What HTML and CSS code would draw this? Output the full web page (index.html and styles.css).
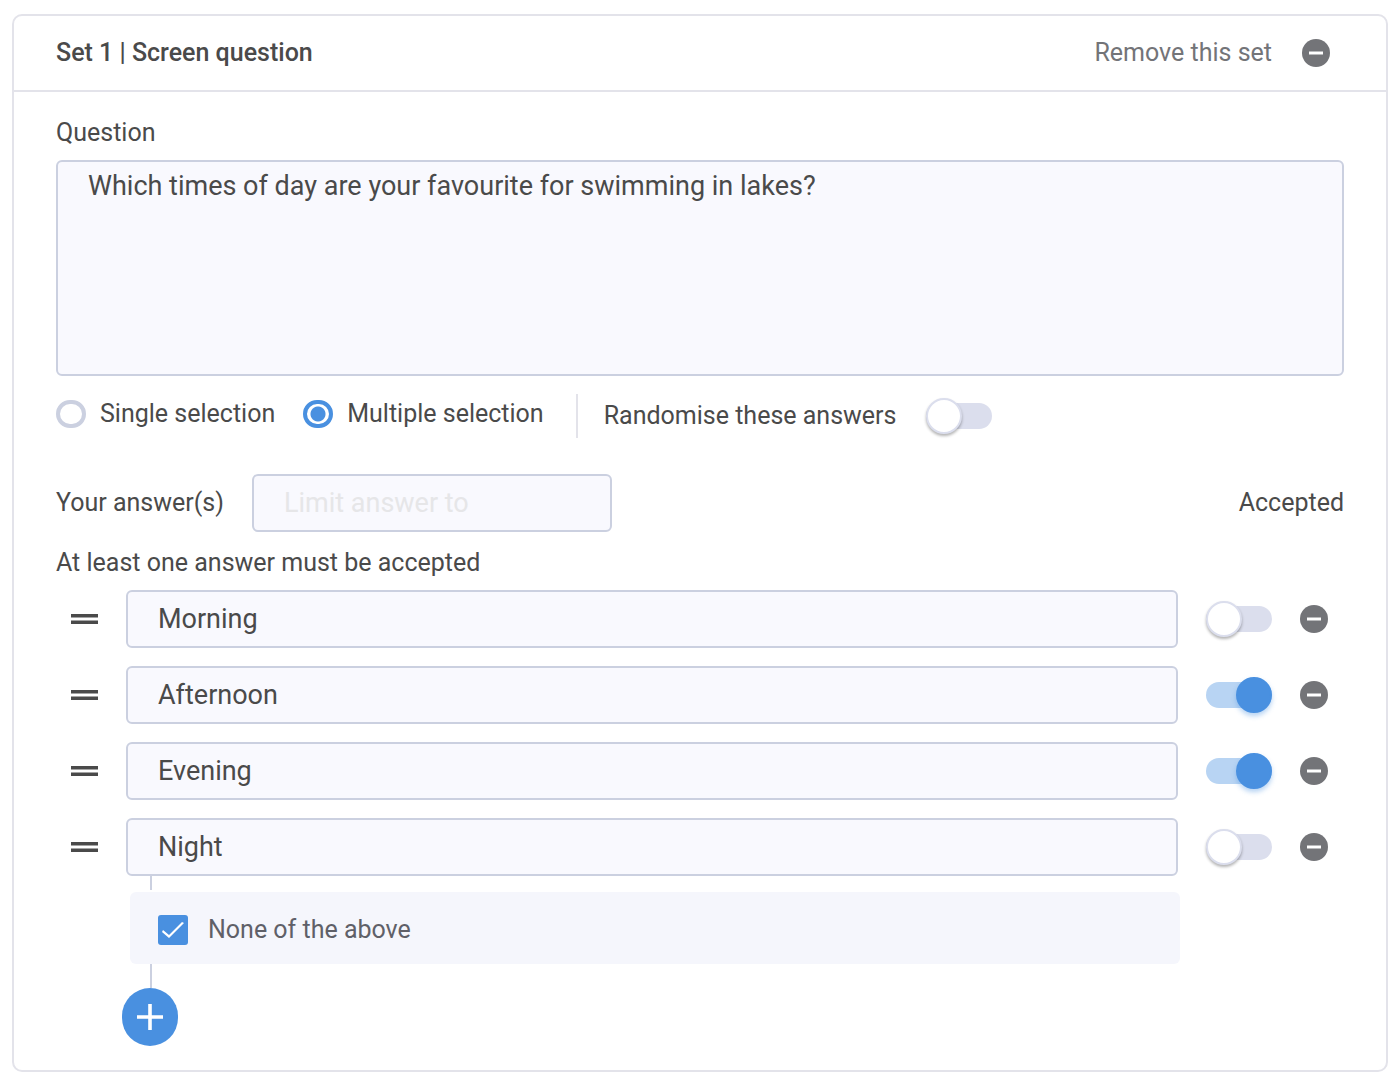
FILE: index.html
```html
<!DOCTYPE html>
<html lang="en">
<head>
  <meta charset="UTF-8" />
  <meta name="viewport" content="width=device-width, initial-scale=1" />
  <title>Screen question</title>
  <link rel="stylesheet" href="styles.css">
</head>
<body>
  <!-- shared icons -->
  <svg class="sprite" aria-hidden="true">
    <symbol id="icon-minus" viewBox="0 0 28 28">
      <circle cx="14" cy="14" r="14" fill="#737478" />
      <path d="M7 14h14" stroke="#fff" stroke-width="3" />
    </symbol>
    <symbol id="icon-drag" viewBox="0 0 27 10">
      <path d="M0 1.7h27M0 8.3h27" stroke="#4a4a4a" stroke-width="3.4" />
    </symbol>
  </svg>

  <form class="set">
    <header class="set-header">
      <h2 class="set-title">Set 1 | Screen question</h2>
      <button type="button" class="remove-set">
        <span>Remove this set</span>
        <svg class="icon-minus"><use href="#icon-minus" /></svg>
      </button>
    </header>

    <div class="set-body">
      <label class="label" for="question">Question</label>
      <textarea id="question" class="field question">Which times of day are your favourite for swimming in lakes?</textarea>

      <div class="options">
        <label class="option"><input type="radio" class="radio" name="selection" />Single selection</label>
        <label class="option"><input type="radio" class="radio" name="selection" checked />Multiple selection</label>
        <div class="randomise">
          <label for="randomise">Randomise these answers</label>
          <input type="checkbox" id="randomise" class="toggle" />
        </div>
      </div>

      <div class="answers-header">
        <label for="limit">Your answer(s)</label>
        <input type="text" id="limit" class="field limit" placeholder="Limit answer to" />
        <span class="accepted">Accepted</span>
      </div>
      <p class="hint">At least one answer must be accepted</p>

      <ul class="answers">
        <li class="answer">
          <button type="button" class="icon-button" aria-label="Move answer"><svg class="icon-drag"><use href="#icon-drag" /></svg></button>
          <input type="text" class="field" value="Morning" aria-label="Answer 1" />
          <input type="checkbox" class="toggle" aria-label="Accepted" />
          <button type="button" class="icon-button" aria-label="Remove answer"><svg class="icon-minus"><use href="#icon-minus" /></svg></button>
        </li>
        <li class="answer">
          <button type="button" class="icon-button" aria-label="Move answer"><svg class="icon-drag"><use href="#icon-drag" /></svg></button>
          <input type="text" class="field" value="Afternoon" aria-label="Answer 2" />
          <input type="checkbox" class="toggle" aria-label="Accepted" checked />
          <button type="button" class="icon-button" aria-label="Remove answer"><svg class="icon-minus"><use href="#icon-minus" /></svg></button>
        </li>
        <li class="answer">
          <button type="button" class="icon-button" aria-label="Move answer"><svg class="icon-drag"><use href="#icon-drag" /></svg></button>
          <input type="text" class="field" value="Evening" aria-label="Answer 3" />
          <input type="checkbox" class="toggle" aria-label="Accepted" checked />
          <button type="button" class="icon-button" aria-label="Remove answer"><svg class="icon-minus"><use href="#icon-minus" /></svg></button>
        </li>
        <li class="answer">
          <button type="button" class="icon-button" aria-label="Move answer"><svg class="icon-drag"><use href="#icon-drag" /></svg></button>
          <input type="text" class="field" value="Night" aria-label="Answer 4" />
          <input type="checkbox" class="toggle" aria-label="Accepted" />
          <button type="button" class="icon-button" aria-label="Remove answer"><svg class="icon-minus"><use href="#icon-minus" /></svg></button>
        </li>
      </ul>

      <div class="connector"></div>
      <label class="none">
        <input type="checkbox" class="checkbox" checked />
        None of the above
      </label>
      <div class="connector connector-long"></div>
      <button type="button" class="add" aria-label="Add answer">
        <svg width="26" height="26" viewBox="0 0 26 26"><path d="M0 13h26M13 0v26" stroke="#fff" stroke-width="3.6" /></svg>
      </button>
    </div>
  </form>
</body>
</html>
```
FILE: styles.css
```css
*,
*::before {
  box-sizing: border-box;
}

body {
  margin: 14px 10px 12px 12px;
  background-color: #fff;
  color: #4a4a4a;
  font-family: Roboto, Arial, sans-serif;
  font-size: 25px;
  line-height: 30px;
}

input,
textarea,
button {
  margin: 0;
  font-family: inherit;
}

button {
  padding: 0;
  border: none;
  background: none;
  cursor: pointer;
}

svg {
  display: block;
}

.sprite {
  display: none;
}

.set {
  border: 2px solid #e3e3ea;
  border-radius: 10px;
}

.set-header {
  display: flex;
  align-items: center;
  justify-content: space-between;
  padding: 22px 56px 22px 42px;
  border-bottom: 2px solid #e3e3ea;
}

.set-title {
  margin: 0;
  font-size: 25px;
  font-weight: 500;
}

.remove-set {
  display: flex;
  align-items: center;
  gap: 30px;
  color: #737478;
  font-size: 25px;
  line-height: 30px;
}

.icon-minus {
  width: 28px;
  height: 28px;
}

.icon-drag {
  width: 27px;
  height: 10px;
}

.set-body {
  padding: 26px 42px 24px;
}

.label {
  display: block;
  margin-bottom: 12px;
}

.field {
  min-width: 0;
  height: 58px;
  padding: 0 30px;
  border: 2px solid #cbd0e0;
  border-radius: 6px;
  background-color: #f9f9fe;
  color: #4a4a4a;
  font-size: 27px;
  line-height: 32px;
}

.field::placeholder {
  color: #e6e6e8;
}

.question {
  display: block;
  width: 100%;
  height: 216px;
  padding: 8px 30px;
  resize: none;
}

.options {
  display: flex;
  align-items: center;
  gap: 28px;
  margin-top: 18px;
}

.option {
  display: flex;
  align-items: center;
  gap: 14px;
  padding-bottom: 4px;
}

.radio {
  width: 30px;
  height: 28px;
  border: 4px solid #cbd0e0;
  border-radius: 14px;
  appearance: none;
}

.radio:checked {
  border-color: #4990e0;
  background: radial-gradient(circle, #4990e0 7px, #fff 8px);
}

.randomise {
  display: flex;
  align-items: center;
  gap: 30px;
  height: 44px;
  margin-left: 4px;
  padding-left: 26px;
  border-left: 2px solid #e3e3ea;
}

.toggle {
  position: relative;
  flex: none;
  width: 66px;
  height: 26px;
  border-radius: 13px;
  background-color: #dbdeed;
  appearance: none;
  cursor: pointer;
}

.toggle::before {
  content: "";
  position: absolute;
  top: -5px;
  left: 0;
  width: 36px;
  height: 36px;
  border: 2px solid #dbdeed;
  border-radius: 50%;
  background-color: #fff;
  box-shadow: 0 2px 3px rgba(0, 0, 0, 0.3);
}

.toggle:checked {
  background-color: #b8d4f3;
}

.toggle:checked::before {
  right: 0;
  left: auto;
  border-color: #4990e0;
  background-color: #4990e0;
  box-shadow: 0 3px 5px rgba(73, 144, 224, 0.4);
}

.answers-header {
  display: flex;
  align-items: center;
  margin-top: 36px;
}

.limit {
  width: 360px;
  margin-left: 28px;
}

.accepted {
  margin-left: auto;
}

.hint {
  margin: 16px 0 12px;
}

.answers {
  display: flex;
  flex-direction: column;
  gap: 18px;
  margin: 0;
  padding: 0 16px 0 15px;
  list-style: none;
}

.answer {
  display: flex;
  align-items: center;
  gap: 28px;
}

.answer .field {
  flex: 1;
}

.connector {
  width: 2px;
  height: 14px;
  margin: 0 0 2px 94px;
  background-color: #cbd0e0;
}

.connector-long {
  height: 24px;
  margin-bottom: 0;
}

.none {
  display: flex;
  align-items: center;
  gap: 20px;
  height: 72px;
  margin: 0 164px 0 74px;
  padding: 4px 28px 0;
  border-radius: 6px;
  background-color: #f5f6fc;
  color: #5f6068;
}

.checkbox {
  display: grid;
  place-items: center;
  width: 30px;
  height: 30px;
  border-radius: 3px;
  background-color: #4990e0;
  appearance: none;
}

.checkbox:checked::before {
  content: "";
  width: 22px;
  height: 16px;
  background-color: #fff;
  clip-path: polygon(0 10px, 1px 8px, 7px 13px, 20px 0, 22px 1px, 7px 16px);
}

.add {
  display: flex;
  align-items: center;
  justify-content: center;
  width: 56px;
  height: 58px;
  margin-left: 66px;
  border-radius: 28px;
  background-color: #4990e0;
}
```
